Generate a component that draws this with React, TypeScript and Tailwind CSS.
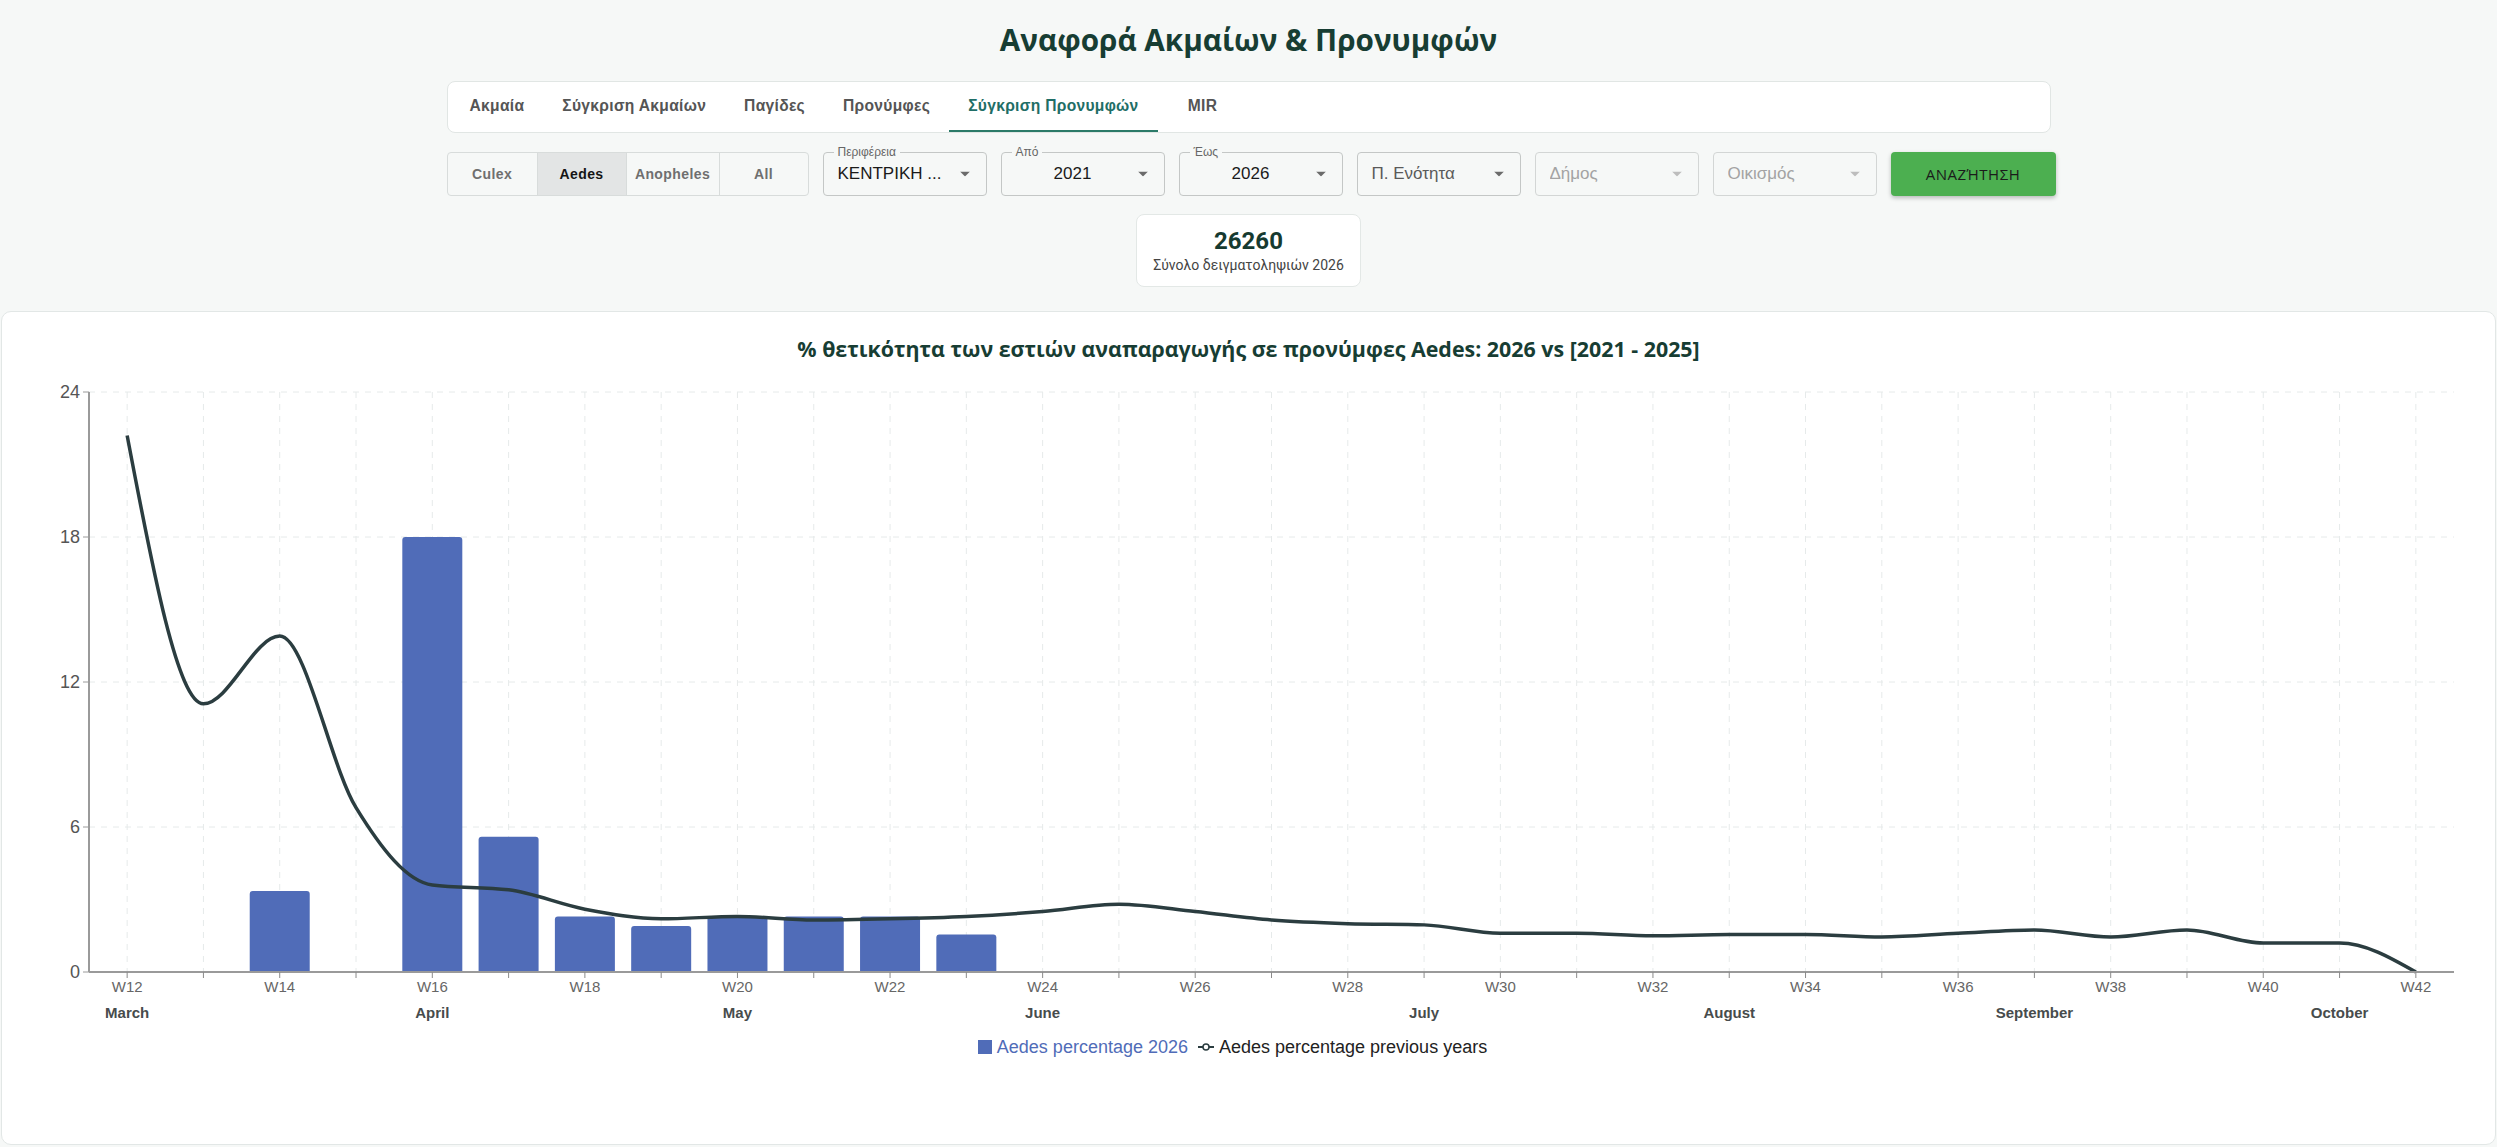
import React from 'react';

// weekly data, W12 .. W42
const WEEKS = Array.from({ length: 31 }, (_, i) => i + 12);

const PREVIOUS = [
  22.2, 11.1, 13.9, 6.8, 3.6, 3.4, 2.6, 2.2, 2.3, 2.15, 2.2, 2.3, 2.5, 2.8, 2.5, 2.15,
  2.0, 1.95, 1.6, 1.6, 1.5, 1.55, 1.55, 1.45, 1.6, 1.74, 1.45, 1.74, 1.2, 1.2, 0,
];

const CURRENT: Record<number, number> = {
  14: 3.35,
  16: 18.0,
  17: 5.6,
  18: 2.3,
  19: 1.9,
  20: 2.3,
  21: 2.3,
  22: 2.3,
  23: 1.55,
};

const MONTHS: { week: number; name: string }[] = [
  { week: 12, name: 'March' },
  { week: 16, name: 'April' },
  { week: 20, name: 'May' },
  { week: 24, name: 'June' },
  { week: 29, name: 'July' },
  { week: 33, name: 'August' },
  { week: 37, name: 'September' },
  { week: 41, name: 'October' },
];

const PLOT_LEFT = 87;
const PLOT_RIGHT = 2452;
const PLOT_TOP = 29;
const PLOT_BOTTOM = 609;
const Y_MAX = 24;
const BAND = (PLOT_RIGHT - PLOT_LEFT) / WEEKS.length;
const BAR_W = 60;

const xAt = (i: number) => PLOT_LEFT + BAND * (i + 0.5);
const yAt = (v: number) => PLOT_BOTTOM - (v * (PLOT_BOTTOM - PLOT_TOP)) / Y_MAX;

// same maths as d3 curveMonotoneX
function monotonePath(pts: [number, number][]) {
  const n = pts.length;
  const s: number[] = [];
  for (let i = 0; i < n - 1; i++) {
    s.push((pts[i + 1][1] - pts[i][1]) / (pts[i + 1][0] - pts[i][0]));
  }
  const t = new Array(n).fill(0);
  for (let i = 1; i < n - 1; i++) {
    const h0 = pts[i][0] - pts[i - 1][0];
    const h1 = pts[i + 1][0] - pts[i][0];
    const s0 = s[i - 1];
    const s1 = s[i];
    const p = (s0 * h1 + s1 * h0) / (h0 + h1);
    const sg0 = s0 < 0 ? -1 : 1;
    const sg1 = s1 < 0 ? -1 : 1;
    t[i] = (sg0 + sg1) * Math.min(Math.abs(s0), Math.abs(s1), 0.5 * Math.abs(p)) || 0;
  }
  t[0] = (3 * s[0] - t[1]) / 2;
  t[n - 1] = (3 * s[n - 2] - t[n - 2]) / 2;

  let d = `M${pts[0][0]},${pts[0][1]}`;
  for (let i = 0; i < n - 1; i++) {
    const [x0, y0] = pts[i];
    const [x1, y1] = pts[i + 1];
    const dx = (x1 - x0) / 3;
    d += ` C${x0 + dx},${y0 + dx * t[i]} ${x1 - dx},${y1 - dx * t[i + 1]} ${x1},${y1}`;
  }
  return d;
}

function barPath(cx: number, v: number) {
  const x = cx - BAR_W / 2;
  const y = yAt(v);
  const r = 3;
  return `M${x},${PLOT_BOTTOM} V${y + r} Q${x},${y} ${x + r},${y} H${x + BAR_W - r} Q${x + BAR_W},${y} ${x + BAR_W},${y + r} V${PLOT_BOTTOM} Z`;
}

const Arrow = ({ color }: { color: string }) => (
  <svg className="absolute right-[16px] top-1/2 -translate-y-1/2" width="10" height="5" viewBox="0 0 10 5">
    <path d="M0 0 L5 5 L10 0 Z" fill={color} />
  </svg>
);

const SelectBox = ({
  label,
  value,
  center,
  disabled,
  muted,
}: {
  label?: string;
  value: string;
  center?: boolean;
  disabled?: boolean;
  muted?: boolean;
}) => (
  <div
    className={`relative w-[164px] h-[44px] shrink-0 rounded border flex items-center pl-[14px] pr-[34px] ${
      disabled ? 'border-[#d3d6d5]' : 'border-[#c4c7c6]'
    }`}
  >
    {label && (
      <span className="absolute -top-[8px] left-[10px] px-[4px] bg-[#f6f8f7] text-[12px] leading-[14px] text-[#666]">
        {label}
      </span>
    )}
    <span
      className={`block w-full whitespace-nowrap overflow-hidden text-[17px] leading-[22px] ${center ? 'text-center' : ''} ${
        disabled ? 'text-[#a3a3a3]' : muted ? 'text-[#5a5a5a]' : 'text-[#1a1a1a]'
      }`}
    >
      {value}
    </span>
    <Arrow color={disabled ? '#bdbdbd' : '#6b6b6b'} />
  </div>
);

const tabs = ['Ακμαία', 'Σύγκριση Ακμαίων', 'Παγίδες', 'Προνύμφες', 'Σύγκριση Προνυμφών', 'MIR'];
const species = [
  { name: 'Culex', w: 'w-[89px]' },
  { name: 'Aedes', w: 'w-[89px]' },
  { name: 'Anopheles', w: 'w-[93px]' },
  { name: 'All', w: 'w-[89px]' },
];

const Chart = () => {
  const linePts: [number, number][] = PREVIOUS.map((v, i) => [xAt(i), yAt(v)]);
  const yTicks = [0, 6, 12, 18, 24];

  return (
    <svg width="2493" height="665" className="block" style={{ fontFamily: '"Liberation Sans", Arial, sans-serif' }}>
      {/* grid */}
      {yTicks.map((v) => (
        <line key={`h${v}`} x1={PLOT_LEFT} x2={PLOT_RIGHT} y1={yAt(v)} y2={yAt(v)} stroke="#e6eaea" strokeDasharray="6 6" />
      ))}
      {WEEKS.map((w, i) => (
        <line key={`v${w}`} x1={xAt(i)} x2={xAt(i)} y1={PLOT_TOP} y2={PLOT_BOTTOM} stroke="#e6eaea" strokeDasharray="6 6" />
      ))}

      {/* bars */}
      {WEEKS.map((w, i) =>
        CURRENT[w] ? <path key={`b${w}`} d={barPath(xAt(i), CURRENT[w])} fill="#506cb8" /> : null
      )}

      {/* previous years line */}
      <path d={monotonePath(linePts)} fill="none" stroke="#2b3d40" strokeWidth="3.5" />

      {/* y axis */}
      <line x1={PLOT_LEFT} x2={PLOT_LEFT} y1={PLOT_TOP} y2={PLOT_BOTTOM} stroke="#9a9a9a" strokeWidth="2" />
      {yTicks.map((v) => (
        <g key={`yt${v}`}>
          <line x1={PLOT_LEFT - 6} x2={PLOT_LEFT} y1={yAt(v)} y2={yAt(v)} stroke="#9a9a9a" />
          <text x={PLOT_LEFT - 9} y={yAt(v) + 6} textAnchor="end" fontSize="18" fill="#555">
            {v}
          </text>
        </g>
      ))}

      {/* x axis */}
      <line x1={PLOT_LEFT} x2={PLOT_RIGHT} y1={PLOT_BOTTOM} y2={PLOT_BOTTOM} stroke="#9a9a9a" strokeWidth="2" />
      {WEEKS.map((w, i) => (
        <g key={`xt${w}`}>
          <line x1={xAt(i)} x2={xAt(i)} y1={PLOT_BOTTOM} y2={PLOT_BOTTOM + 6} stroke="#8a8a8a" />
          {w % 2 === 0 && (
            <text x={xAt(i)} y={PLOT_BOTTOM + 20} textAnchor="middle" fontSize="15" fill="#666">
              W{w}
            </text>
          )}
        </g>
      ))}
      {MONTHS.map((m) => (
        <text
          key={m.name}
          x={xAt(m.week - 12)}
          y={PLOT_BOTTOM + 46}
          textAnchor="middle"
          fontSize="15"
          fontWeight="bold"
          fill="#474c4c"
        >
          {m.name}
        </text>
      ))}
    </svg>
  );
};

export default function App() {
  return (
    <div className="min-h-screen bg-[#f6f8f7] font-['Open_Sans','Noto_Sans',sans-serif]">
      <div className="pt-[20px] pb-[24px]">
        <h1 className="text-center text-[29.7px] leading-[40px] font-bold text-[#173d33]">Αναφορά Ακμαίων &amp; Προνυμφών</h1>

        <div className="mx-auto w-[1604px] mt-[21px]">
          {/* tabs */}
          <div className="bg-white border border-[#e1e6e4] rounded-lg pl-[3px] flex font-['Liberation_Sans',Arial,sans-serif]">
            {tabs.map((t) => {
              const active = t === 'Σύγκριση Προνυμφών';
              return (
                <div
                  key={t}
                  className={`h-[50px] min-w-[90px] px-[19px] flex items-center justify-center text-[15.6px] font-bold tracking-[0.3px] border-b-2 ${
                    active ? 'text-[#1f6e66] border-[#2b7a68]' : 'text-[#555] border-transparent'
                  }`}
                >
                  {t}
                </div>
              );
            })}
          </div>

          {/* filters */}
          <div className="mt-[19px] flex gap-[14px] font-['Liberation_Sans',Arial,sans-serif]">
            <div className="flex h-[44px] border border-[#d8dcdb] rounded overflow-hidden shrink-0">
              {species.map((s, i) => (
                <div
                  key={s.name}
                  className={`${s.w} flex items-center justify-center text-[14px] font-bold tracking-[0.4px] ${
                    i > 0 ? 'border-l border-[#d8dcdb]' : ''
                  } ${s.name === 'Aedes' ? 'bg-[#e3e5e5] text-[#151515]' : 'text-[#6f6f6f]'}`}
                >
                  {s.name}
                </div>
              ))}
            </div>
            <SelectBox label="Περιφέρεια" value="ΚΕΝΤΡΙΚΗ ..." />
            <SelectBox label="Από" value="2021" center />
            <SelectBox label="Έως" value="2026" center />
            <SelectBox value="Π. Ενότητα" muted />
            <SelectBox value="Δήμος" disabled />
            <SelectBox value="Οικισμός" disabled />
            <button className="w-[165px] h-[44px] shrink-0 rounded bg-[#4caf50] shadow-[0_2px_4px_rgba(0,0,0,0.25)] text-[15px] tracking-[0.5px] text-[#1b1b1b] font-['Open_Sans',sans-serif]">
              ΑΝΑΖΉΤΗΣΗ
            </button>
          </div>
        </div>

        {/* summary */}
        <div className="mx-auto mt-[18px] w-fit h-[73px] px-[16px] bg-white border border-[#e3e8e6] rounded-lg flex flex-col items-center justify-center font-['Roboto',sans-serif]">
          <div className="text-[24px] leading-[28px] font-bold text-[#163a30]">26260</div>
          <div className="text-[14px] leading-[20px] text-[#444]">Σύνολο δειγματοληψιών 2026</div>
        </div>
      </div>

      {/* chart card */}
      <div className="mx-[1px] bg-white border border-[#e2e7e6] rounded-[10px] pt-[23px] pb-[85px]">
        <h2 className="text-center text-[21.4px] leading-[28px] font-bold text-[#173d33]">
          % θετικότητα των εστιών αναπαραγωγής σε προνύμφες Aedes: 2026 vs [2021 - 2025]
        </h2>
        <Chart />
        <div className="mt-[7px] h-[24px] flex items-center justify-center pr-[32px] gap-[10px] text-[18px] font-['Liberation_Sans',Arial,sans-serif]">
          <div className="flex items-center gap-[5px] text-[#506cb8]">
            <span className="w-[14px] h-[14px] bg-[#506cb8]" />
            Aedes percentage 2026
          </div>
          <div className="flex items-center gap-[5px] text-[#222]">
            <svg width="16" height="10" viewBox="0 0 16 10">
              <line x1="0" y1="5" x2="16" y2="5" stroke="#2b3d40" strokeWidth="2" />
              <circle cx="8" cy="5" r="3" fill="#fff" stroke="#2b3d40" strokeWidth="1.5" />
            </svg>
            Aedes percentage previous years
          </div>
        </div>
      </div>
    </div>
  );
}
